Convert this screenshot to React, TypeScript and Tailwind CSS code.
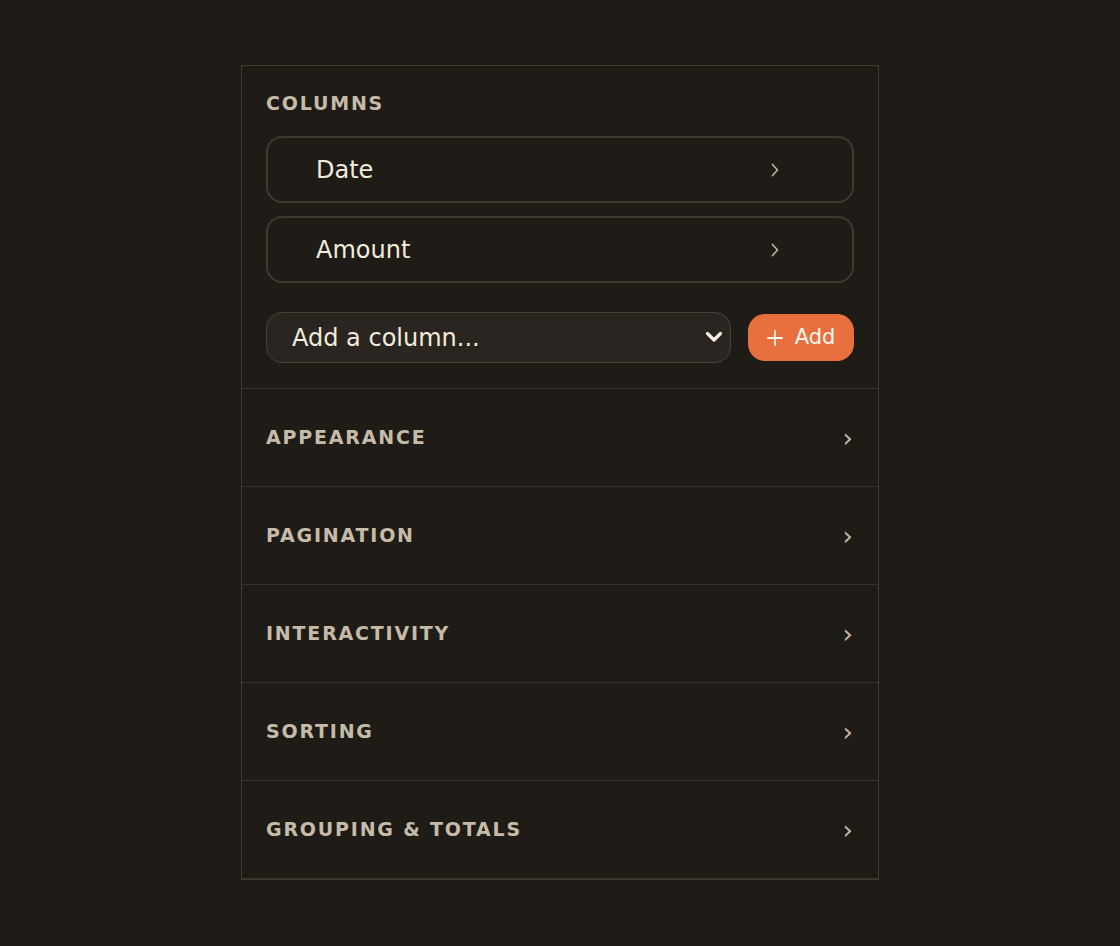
import { useState } from "react";

const sections = ["Appearance", "Pagination", "Interactivity", "Sorting", "Grouping & Totals"];

function ChevronRight({ className }: { className?: string }) {
  return (
    <svg viewBox="0 0 8 14" className={className} fill="none" stroke="currentColor" strokeWidth="1.7" strokeLinecap="round" strokeLinejoin="round">
      <path d="M1.5 1.5 L6.5 7 L1.5 12.5" />
    </svg>
  );
}

export default function App() {
  const [columns] = useState(["Date", "Amount"]);

  return (
    <div
      className="min-h-screen bg-[#1f1b17] flex justify-center pt-[65px]"
      style={{ fontFamily: '"DejaVu Sans", sans-serif' }}
    >
      <div className="w-[638px] h-fit border border-[#433b30] bg-[#1f1b17]">
        {/* columns */}
        <section className="px-6 pt-6 pb-[25px] border-b border-[#38322a]">
          <h2 className="text-[19px] leading-[27px] font-bold tracking-[0.095em] text-[#c6bba8] mb-[19px]">
            COLUMNS
          </h2>
          <div className="flex flex-col gap-[13px]">
            {columns.map((c) => (
              <div
                key={c}
                className="h-[67px] flex items-center justify-between pl-[48px] pr-[73px] rounded-[16px] border-2 border-[#413a2f]"
              >
                <span className="text-[24px] text-[#f3ebdc]">{c}</span>
                <ChevronRight className="w-[8px] h-[14px] text-[#bcb09e]" />
              </div>
            ))}
          </div>
          <div className="flex items-center gap-[17px] mt-[29px]">
            <div className="relative flex-1 h-[51px]">
              <select className="appearance-none w-full h-full rounded-[16px] bg-[#2a2520] border border-[#4a4237] pl-[25px] text-[24px] text-[#f3ebdc] outline-none">
                <option>Add a column...</option>
              </select>
              <svg
                viewBox="0 0 18 12"
                className="absolute right-[8px] top-[19px] w-[18px] h-[12px] text-[#f6efe2] pointer-events-none"
                fill="none"
                stroke="currentColor"
                strokeWidth="3.2"
                strokeLinecap="round"
                strokeLinejoin="round"
              >
                <path d="M2.5 2.5 L9 9 L15.5 2.5" />
              </svg>
            </div>
            <button className="w-[106px] h-[47px] rounded-[17px] bg-[#e8703f] flex items-center justify-center gap-[12px] text-[21px] text-[#fff7ee]">
              <svg viewBox="0 0 16 16" className="w-[16px] h-[16px]" fill="none" stroke="currentColor" strokeWidth="1.8" strokeLinecap="round">
                <path d="M8 1 V15 M1 8 H15" />
              </svg>
              <span>Add</span>
            </button>
          </div>
        </section>

        {sections.map((s) => (
          <div
            key={s}
            className="h-[98px] flex items-center justify-between pl-6 pr-[25px] border-b border-[#38322a]"
          >
            <span className="text-[19px] font-bold tracking-[0.095em] text-[#c6bba8] uppercase">{s}</span>
            <span className="text-[26px] leading-none text-[#c4b9a7]">›</span>
          </div>
        ))}
      </div>
    </div>
  );
}
